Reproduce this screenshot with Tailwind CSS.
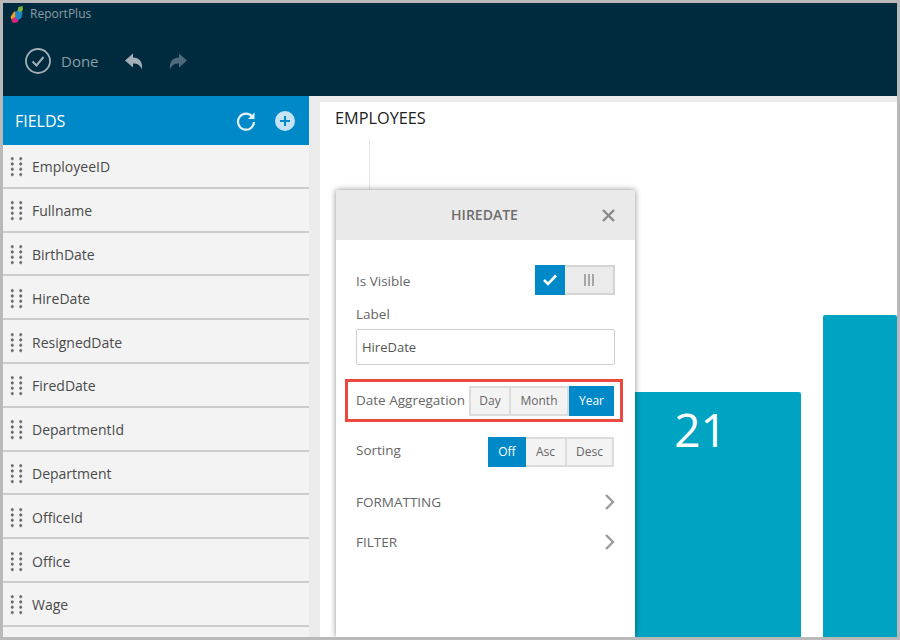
<!DOCTYPE html>
<html lang="en">
<head>
  <meta charset="UTF-8">
  <title>ReportPlus</title>
  <script src="https://cdn.jsdelivr.net/npm/@tailwindcss/browser@4"></script>
</head>
<body class="bg-white">
  <div class="w-[900px] h-[640px] border-[3px] border-[#b9b9b9] flex flex-col overflow-hidden font-['Open_Sans',sans-serif]">

    <!-- top bar -->
    <header class="h-[93px] shrink-0 bg-[#002b3e]">
      <div class="flex items-center h-[22px] pl-[7px] gap-[6px]">
        <svg width="14" height="17" viewBox="0 0 14 17">
          <path d="M0.5 11 L4 5.5 L7 6 L6.5 14 L2 14.5 Z" fill="#eda32a"/>
          <path d="M1.5 13 L5 11 L8.5 12 L8 16 L4 17 L2 16 Z" fill="#d8267f"/>
          <path d="M5 6 L9 4 L12.5 6 L11.5 12 L8 14 L5.5 12 Z" fill="#1c86c8"/>
          <path d="M7.5 5 L8.5 1 L12.5 0 L13 4 L11 6 Z" fill="#7fb23c"/>
        </svg>
        <span class="text-[12px] text-[#8d9ca6]">ReportPlus</span>
      </div>
      <div class="flex items-center h-[40px] mt-[16px] pl-[22px]">
        <svg width="26" height="26" viewBox="0 0 26 26" fill="none" stroke="#a3afb6">
          <circle cx="13" cy="13" r="12" stroke-width="1.8"/>
          <path d="M7.5 13.5 L11.5 17.5 L18.5 9" stroke-width="2"/>
        </svg>
        <span class="ml-[10px] text-[15px] text-[#8d9ca6]">Done</span>
        <svg class="ml-[26px]" width="18" height="17" viewBox="0 0 18 16"><path d="M0 7 L8 0 V4 C14 4 18 8 17 16 C15 11 12 10 8 10 V14 Z" fill="#a3afb6"/></svg>
        <svg class="ml-[26px]" width="18" height="17" viewBox="0 0 18 16"><path d="M18 7 L10 0 V4 C4 4 0 8 1 16 C3 11 6 10 10 10 V14 Z" fill="#4f6a79"/></svg>
      </div>
    </header>

    <div class="flex flex-1 min-h-0">
      <!-- fields -->
      <aside class="w-[306px] shrink-0 bg-[#f3f3f3] flex flex-col">
        <div class="h-[49px] shrink-0 bg-[#0089c9] flex items-center pl-[12px] pr-[14px]">
          <span class="text-[16px] text-white">FIELDS</span>
          <svg class="ml-auto" width="20" height="20" viewBox="0 0 20 20" fill="none" stroke="#e3f1f9" stroke-width="2.2">
            <path d="M16.5 6 A8 8 0 1 0 18 11"/>
            <path d="M18.5 1.5 V8 H12" fill="#e3f1f9" stroke="none"/>
          </svg>
          <span class="ml-[19px] w-[20px] h-[20px] rounded-full bg-[#c5e3f3] relative">
            <span class="absolute left-[5px] top-[9px] w-[10px] h-[2px] bg-[#0089c9]"></span>
            <span class="absolute left-[9px] top-[5px] w-[2px] h-[10px] bg-[#0089c9]"></span>
          </span>
        </div>
        <div class="flex flex-col">
          <div class="h-[43.8px] shrink-0 border-b-2 border-[#cccccc] flex items-center pl-[5px] pt-[2px]"><span class="w-[17px] h-[21px] bg-[radial-gradient(circle,#666_1.3px,transparent_1.7px)] bg-[length:8.5px_5.3px]"></span><span class="ml-[7px] text-[14px] text-[#4a4a4a]">EmployeeID</span></div>
          <div class="h-[43.8px] shrink-0 border-b-2 border-[#cccccc] flex items-center pl-[5px] pt-[2px]"><span class="w-[17px] h-[21px] bg-[radial-gradient(circle,#666_1.3px,transparent_1.7px)] bg-[length:8.5px_5.3px]"></span><span class="ml-[7px] text-[14px] text-[#4a4a4a]">Fullname</span></div>
          <div class="h-[43.8px] shrink-0 border-b-2 border-[#cccccc] flex items-center pl-[5px] pt-[2px]"><span class="w-[17px] h-[21px] bg-[radial-gradient(circle,#666_1.3px,transparent_1.7px)] bg-[length:8.5px_5.3px]"></span><span class="ml-[7px] text-[14px] text-[#4a4a4a]">BirthDate</span></div>
          <div class="h-[43.8px] shrink-0 border-b-2 border-[#cccccc] flex items-center pl-[5px] pt-[2px]"><span class="w-[17px] h-[21px] bg-[radial-gradient(circle,#666_1.3px,transparent_1.7px)] bg-[length:8.5px_5.3px]"></span><span class="ml-[7px] text-[14px] text-[#4a4a4a]">HireDate</span></div>
          <div class="h-[43.8px] shrink-0 border-b-2 border-[#cccccc] flex items-center pl-[5px] pt-[2px]"><span class="w-[17px] h-[21px] bg-[radial-gradient(circle,#666_1.3px,transparent_1.7px)] bg-[length:8.5px_5.3px]"></span><span class="ml-[7px] text-[14px] text-[#4a4a4a]">ResignedDate</span></div>
          <div class="h-[43.8px] shrink-0 border-b-2 border-[#cccccc] flex items-center pl-[5px] pt-[2px]"><span class="w-[17px] h-[21px] bg-[radial-gradient(circle,#666_1.3px,transparent_1.7px)] bg-[length:8.5px_5.3px]"></span><span class="ml-[7px] text-[14px] text-[#4a4a4a]">FiredDate</span></div>
          <div class="h-[43.8px] shrink-0 border-b-2 border-[#cccccc] flex items-center pl-[5px] pt-[2px]"><span class="w-[17px] h-[21px] bg-[radial-gradient(circle,#666_1.3px,transparent_1.7px)] bg-[length:8.5px_5.3px]"></span><span class="ml-[7px] text-[14px] text-[#4a4a4a]">DepartmentId</span></div>
          <div class="h-[43.8px] shrink-0 border-b-2 border-[#cccccc] flex items-center pl-[5px] pt-[2px]"><span class="w-[17px] h-[21px] bg-[radial-gradient(circle,#666_1.3px,transparent_1.7px)] bg-[length:8.5px_5.3px]"></span><span class="ml-[7px] text-[14px] text-[#4a4a4a]">Department</span></div>
          <div class="h-[43.8px] shrink-0 border-b-2 border-[#cccccc] flex items-center pl-[5px] pt-[2px]"><span class="w-[17px] h-[21px] bg-[radial-gradient(circle,#666_1.3px,transparent_1.7px)] bg-[length:8.5px_5.3px]"></span><span class="ml-[7px] text-[14px] text-[#4a4a4a]">OfficeId</span></div>
          <div class="h-[43.8px] shrink-0 border-b-2 border-[#cccccc] flex items-center pl-[5px] pt-[2px]"><span class="w-[17px] h-[21px] bg-[radial-gradient(circle,#666_1.3px,transparent_1.7px)] bg-[length:8.5px_5.3px]"></span><span class="ml-[7px] text-[14px] text-[#4a4a4a]">Office</span></div>
          <div class="h-[43.8px] shrink-0 border-b-2 border-[#cccccc] flex items-center pl-[5px] pt-[2px]"><span class="w-[17px] h-[21px] bg-[radial-gradient(circle,#666_1.3px,transparent_1.7px)] bg-[length:8.5px_5.3px]"></span><span class="ml-[7px] text-[14px] text-[#4a4a4a]">Wage</span></div>
        </div>
      </aside>

      <!-- canvas -->
      <main class="flex-1 min-w-0 relative bg-[#ebebeb] pt-[6px] pl-[11px]">
        <div class="h-full bg-white pl-[15px] relative">
          <h2 class="text-[16.3px] text-[#222] pt-[4px] leading-[24px]">EMPLOYEES</h2>
          <div class="absolute left-[49px] top-[37px] h-[60px] w-px bg-[#e6e6e6]"></div>
          <!-- bars -->
          <div class="absolute left-[279px] top-[290px] bottom-0 w-[202px] bg-[#00a4c3] rounded-t-[2px] flex justify-center">
            <span class="pl-[1px] text-[46px] leading-[74px] text-white">21</span>
          </div>
          <div class="absolute left-[503px] top-[213px] bottom-0 right-0 bg-[#00a4c3] rounded-t-[2px]"></div>
        </div>

        <!-- hiredate popover -->
        <div class="absolute left-[27px] top-[94px] bottom-0 w-[299px] bg-white shadow-[0_0_6px_rgba(0,0,0,0.45)] text-[#666]">
          <div class="h-[50px] bg-[#eaeaea] flex items-center justify-center relative">
            <span class="text-[14px] font-semibold text-[#6e6e6e] pb-[1px] pr-[2px]">HIREDATE</span>
            <svg class="absolute right-[20px] top-[19px]" width="13" height="13" viewBox="0 0 13 13" stroke="#8a8a8a" stroke-width="2.4"><path d="M1 1 L12 12 M12 1 L1 12"/></svg>
          </div>
          <div class="px-[20px]">
            <div class="flex items-center justify-between mt-[25px] h-[30px]">
              <span class="text-[13.5px] pt-[2px]">Is Visible</span>
              <div class="flex w-[80px] h-[30px]">
                <span class="w-[30px] bg-[#0089c9] flex items-center justify-center">
                  <svg width="14" height="12" viewBox="0 0 14 12" fill="none" stroke="#fff" stroke-width="2.6"><path d="M1 6 L5 10 L13 1.5"/></svg>
                </span>
                <span class="flex-1 bg-[#ebebeb] border-2 border-l-0 border-[#d4d4d4] flex items-center justify-center gap-[2px]">
                  <i class="w-[2px] h-[12px] bg-[#a6a6a6]"></i><i class="w-[2px] h-[12px] bg-[#a6a6a6]"></i><i class="w-[2px] h-[12px] bg-[#a6a6a6]"></i>
                </span>
              </div>
            </div>
            <div class="text-[13.5px] mt-[10px] leading-[18px]">Label</div>
            <div class="mt-[6px] h-[36px] w-[259px] border border-[#cfcfcf] rounded-[2px] flex items-center pl-[5px] pt-[1px] text-[13px] text-[#555]">HireDate</div>
          </div>

          <div class="ml-[9px] mt-[14px] h-[43px] w-[278px] border-[3px] border-[#e9493f] flex items-center pl-[8px]">
            <span class="text-[13.5px] w-[113px] shrink-0 whitespace-nowrap">Date Aggregation</span>
            <div class="flex h-[30px] text-[12px]">
              <span class="w-[42px] border-2 border-[#dcdcdc] bg-[#f3f3f3] flex items-center justify-center">Day</span>
              <span class="w-[58px] border-2 border-l-0 border-[#dcdcdc] bg-[#f3f3f3] flex items-center justify-center">Month</span>
              <span class="w-[45px] bg-[#0089c9] text-white flex items-center justify-center">Year</span>
            </div>
          </div>

          <div class="px-[20px] flex justify-between mt-[15px]">
            <span class="text-[13.5px] leading-[26px]">Sorting</span>
            <div class="flex h-[30px] text-[12px] mr-px">
              <span class="w-[38px] bg-[#0089c9] text-white flex items-center justify-center">Off</span>
              <span class="w-[41px] border-2 border-l-0 border-[#dcdcdc] bg-[#f3f3f3] flex items-center justify-center">Asc</span>
              <span class="w-[47px] border-2 border-l-0 border-[#dcdcdc] bg-[#f3f3f3] flex items-center justify-center">Desc</span>
            </div>
          </div>

          <div class="px-[20px] flex items-center justify-between mt-[23px] h-[24px] text-[13.5px]">
            <span>FORMATTING</span>
            <svg width="10" height="16" viewBox="0 0 10 16" fill="none" stroke="#9b9b9b" stroke-width="2.4"><path d="M1 1 L8 8 L1 15"/></svg>
          </div>
          <div class="px-[20px] flex items-center justify-between mt-[16px] h-[24px] text-[13.5px]">
            <span>FILTER</span>
            <svg width="10" height="16" viewBox="0 0 10 16" fill="none" stroke="#9b9b9b" stroke-width="2.4"><path d="M1 1 L8 8 L1 15"/></svg>
          </div>
        </div>
      </main>
    </div>
  </div>
</body>
</html>
